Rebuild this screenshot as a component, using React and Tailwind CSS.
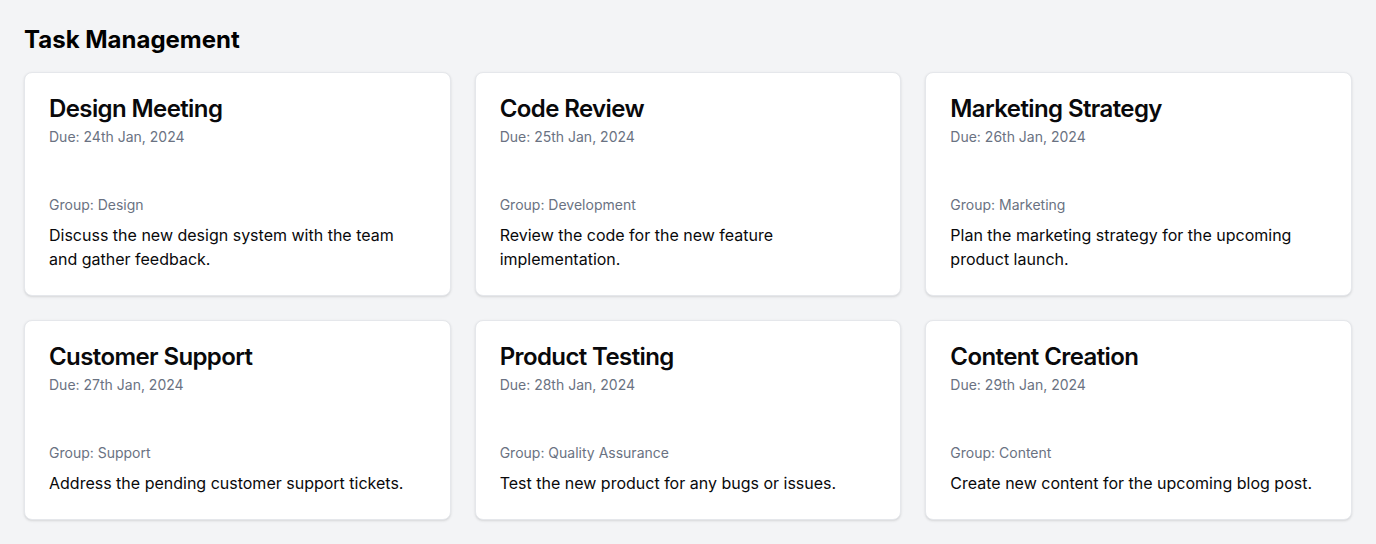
const tasks = [
  {
    title: 'Design Meeting',
    due: '24th Jan, 2024',
    group: 'Design',
    description: 'Discuss the new design system with the team and gather feedback.',
  },
  {
    title: 'Code Review',
    due: '25th Jan, 2024',
    group: 'Development',
    description: 'Review the code for the new feature implementation.',
  },
  {
    title: 'Marketing Strategy',
    due: '26th Jan, 2024',
    group: 'Marketing',
    description: 'Plan the marketing strategy for the upcoming product launch.',
  },
  {
    title: 'Customer Support',
    due: '27th Jan, 2024',
    group: 'Support',
    description: 'Address the pending customer support tickets.',
  },
  {
    title: 'Product Testing',
    due: '28th Jan, 2024',
    group: 'Quality Assurance',
    description: 'Test the new product for any bugs or issues.',
  },
  {
    title: 'Content Creation',
    due: '29th Jan, 2024',
    group: 'Content',
    description: 'Create new content for the upcoming blog post.',
  },
]

function TaskCard({ task }) {
  return (
    <div className="rounded-lg border border-gray-200 bg-white shadow-sm">
      <div className="flex flex-col gap-1.5 p-6">
        <h3 className="text-2xl font-semibold leading-none tracking-tight text-[#09090b]">{task.title}</h3>
        <p className="text-sm text-gray-500">Due: {task.due}</p>
      </div>
      <div className="px-6 pb-6 pt-6">
        <p className="mb-2 text-sm text-gray-500">Group: {task.group}</p>
        <p className="text-base text-[#09090b]">{task.description}</p>
      </div>
    </div>
  )
}

export default function App() {
  return (
    <div className="min-h-screen bg-gray-100 p-6 font-['Inter',sans-serif]">
      <h1 className="mb-4 text-2xl font-bold text-black">Task Management</h1>
      <div className="grid grid-cols-3 gap-6">
        {tasks.map((task) => (
          <TaskCard key={task.title} task={task} />
        ))}
      </div>
    </div>
  )
}
